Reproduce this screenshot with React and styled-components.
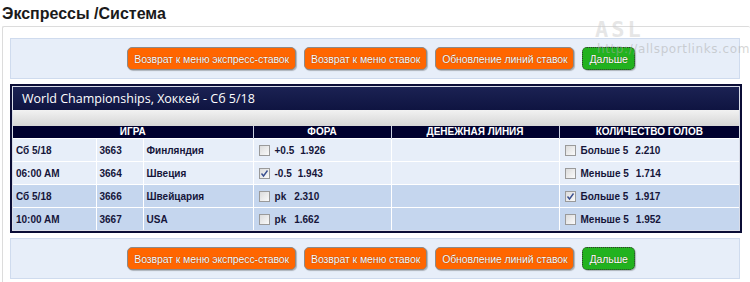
import React from "react";
import styled, { createGlobalStyle } from "styled-components";

const Global = createGlobalStyle`
  html, body { margin: 0; padding: 0; background: #fff; }
  body { font-family: "Liberation Sans", Arial, sans-serif; overflow: hidden; }
`;

const Page = styled.div`
  position: relative;
  width: 750px;
  height: 282px;
  overflow: hidden;
`;

const Title = styled.h1`
  margin: 0;
  padding: 5px 0 0 2px;
  height: 21px;
  font-size: 16px;
  font-weight: bold;
  color: #1a1a1a;
  line-height: 18px;
`;

const Outer = styled.div`
  margin-left: 2px;
  border: 1px solid #dcdcdc;
  border-right: none;
  padding: 11px 0 20px 7px;
  border-radius: 2px;
`;

const Toolbar = styled.div`
  width: 730px;
  height: 41px;
  box-sizing: border-box;
  background: #e7eef9;
  border: 1px solid #cfdbee;
  display: flex;
  align-items: center;
  justify-content: center;
  gap: 8px;
  padding-left: 12px;
  margin-top: ${(p) => p.$mt || 0}px;
`;

const Btn = styled.button`
  height: 23px;
  padding: 0 6px;
  border-radius: 5px;
  border: 1px solid ${(p) => (p.$green ? "#333" : "#8a8a8a")};
  border-style: ${(p) => (p.$green ? "dotted" : "solid")};
  background: ${(p) => (p.$green ? "#22b21f" : "#ff6600")};
  color: #fff;
  font-family: "Liberation Sans", Arial, sans-serif;
  font-size: 10.5px;
  letter-spacing: -0.1px;
  text-shadow: 0 0 1px rgba(60, 20, 0, 0.8);
  box-shadow: 1px 1px 1px rgba(0, 0, 0, 0.25);
  cursor: pointer;
`;

const Frame = styled.div`
  margin-top: 5px;
  width: 732px;
  box-sizing: border-box;
  border: 2px solid #0b0d36;
  padding: 1px;
  background: #d9dde8;
`;

const Head = styled.div`
  height: 23px;
  background: linear-gradient(#1b2253, #0f1441);
  color: #fff;
  font-family: "Open Sans", "Liberation Sans", sans-serif;
  font-size: 12.5px;
  line-height: 23px;
  padding-left: 9px;
`;

const Stripe = styled.div`
  height: 16px;
  background: linear-gradient(#f2f2f2, #d6d6d6);
`;

const Table = styled.table`
  width: 726px;
  border-collapse: collapse;
  table-layout: fixed;
  font-size: 10px;
  font-weight: bold;
`;

const Th = styled.th`
  height: 12px;
  padding: 0;
  background: #00002e;
  color: #fff;
  font-size: 10px;
  line-height: 12px;
  text-align: center;
  border-left: 1px solid #c9cfe0;
  &:first-child { border-left: none; }
`;

const Tr = styled.tr`
  background: ${(p) => (p.$dark ? "#c5d6ee" : "#e7eef9")};
`;

const Td = styled.td`
  height: 22px;
  padding: 0 0 0 3px;
  color: #15153a;
  border-top: 1px solid #fff;
  border-left: 1px solid #fff;
  white-space: nowrap;
  &:first-child { border-left: none; }
`;

const BetCell = styled.div`
  display: flex;
  align-items: center;
  gap: 5px;
  padding-left: 2px;
`;

const Box = styled.span`
  width: 11px;
  height: 11px;
  box-sizing: border-box;
  border: 1px solid #9a9a9a;
  background: linear-gradient(135deg, #dcdcdc, #fafafa);
  display: inline-flex;
  align-items: center;
  justify-content: center;
`;

const Odd = styled.span`
  margin-left: ${(p) => p.$gap || 0}px;
`;

const WmLogo = styled.div`
  position: absolute;
  left: 595px;
  top: 17px;
  font-family: "DejaVu Sans Mono", monospace;
  font-size: 22px;
  font-weight: bold;
  letter-spacing: 3px;
  color: rgba(205, 205, 205, 0.5);
  pointer-events: none;
`;

const WmUrl = styled.div`
  position: absolute;
  left: 597px;
  top: 42px;
  font-family: "DejaVu Sans", sans-serif;
  font-size: 12px;
  letter-spacing: 0.6px;
  color: rgba(170, 170, 170, 0.5);
  pointer-events: none;
  white-space: nowrap;
`;

const Check = ({ on }) => (
  <Box>
    {on && (
      <svg width="9" height="9" viewBox="0 0 9 9">
        <path d="M1.5 4.5 L3.5 7 L7.5 1.5" fill="none" stroke="#3a4f8f" strokeWidth="1.4" />
      </svg>
    )}
  </Box>
);

const Buttons = ({ mt }) => (
  <Toolbar $mt={mt}>
    <Btn>Возврат к меню экспресс-ставок</Btn>
    <Btn>Возврат к меню ставок</Btn>
    <Btn>Обновление линий ставок</Btn>
    <Btn $green>Дальше</Btn>
  </Toolbar>
);

const rows = [
  { d: "Сб 5/18", n: "3663", t: "Финляндия", f: "+0.5", fo: "1.926", fc: false, g: "Больше 5", go: "2.210", gc: false, dark: false },
  { d: "06:00 AM", n: "3664", t: "Швеция", f: "-0.5", fo: "1.943", fc: true, g: "Меньше 5", go: "1.714", gc: false, dark: false },
  { d: "Сб 5/18", n: "3666", t: "Швейцария", f: "pk", fo: "2.310", fc: false, g: "Больше 5", go: "1.917", gc: true, dark: true },
  { d: "10:00 AM", n: "3667", t: "USA", f: "pk", fo: "1.662", fc: false, g: "Меньше 5", go: "1.952", gc: false, dark: true },
];

export default function App() {
  return (
    <Page>
      <Global />
      <Title>Экспрессы /Система</Title>
      <Outer>
        <Buttons />
        <Frame>
          <Head>World Championships, Хоккей - Сб 5/18</Head>
          <Stripe />
          <Table>
            <colgroup>
              <col style={{ width: 83 }} />
              <col style={{ width: 47 }} />
              <col style={{ width: 110 }} />
              <col style={{ width: 138 }} />
              <col style={{ width: 168 }} />
              <col style={{ width: 180 }} />
            </colgroup>
            <thead>
              <tr>
                <Th colSpan={3}>ИГРА</Th>
                <Th>ФОРА</Th>
                <Th>ДЕНЕЖНАЯ ЛИНИЯ</Th>
                <Th>КОЛИЧЕСТВО ГОЛОВ</Th>
              </tr>
            </thead>
            <tbody>
              {rows.map((r, i) => (
                <Tr key={i} $dark={r.dark}>
                  <Td>{r.d}</Td>
                  <Td>{r.n}</Td>
                  <Td>{r.t}</Td>
                  <Td>
                    <BetCell>
                      <Check on={r.fc} />
                      <span>{r.f}</span>
                      <Odd $gap={r.f === "pk" ? 3 : 1}>{r.fo}</Odd>
                    </BetCell>
                  </Td>
                  <Td />
                  <Td>
                    <BetCell>
                      <Check on={r.gc} />
                      <span>{r.g}</span>
                      <Odd $gap={2}>{r.go}</Odd>
                    </BetCell>
                  </Td>
                </Tr>
              ))}
            </tbody>
          </Table>
        </Frame>
        <Buttons mt={5} />
      </Outer>
      <WmLogo>ASL</WmLogo>
      <WmUrl>http://allsportlinks.com</WmUrl>
    </Page>
  );
}
